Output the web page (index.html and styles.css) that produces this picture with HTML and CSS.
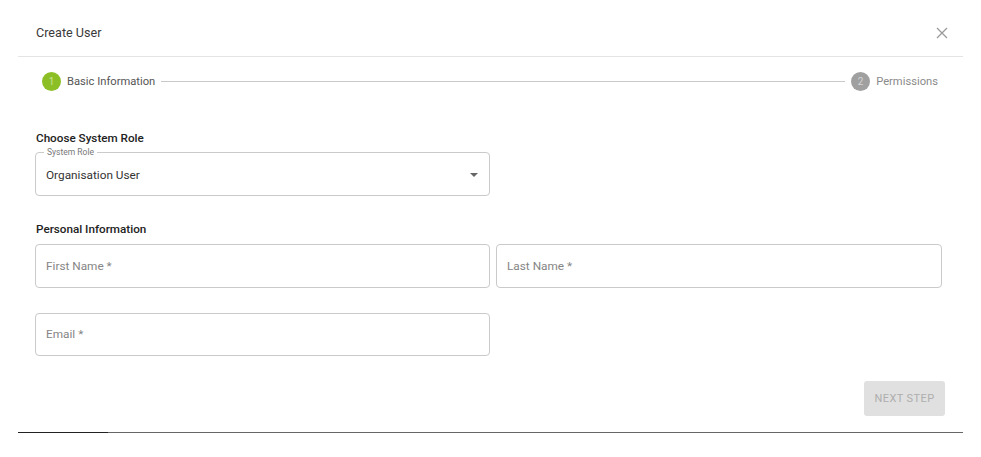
FILE: index.html
```html
<!DOCTYPE html>
<html>
<head>
<meta charset="utf-8">
<link rel="stylesheet" href="styles.css">
</head>
<body>
<div class="dialog">
  <div class="header">
    <span class="title">Create User</span>
    <svg class="close" width="12" height="12" viewBox="0 0 12 12"><path d="M1 1L11 11M11 1L1 11" stroke="#9a9a9a" stroke-width="1.3" fill="none"/></svg>
  </div>
  <div class="stepper">
    <span class="step-num active">1</span>
    <span class="step-label">Basic Information</span>
    <span class="step-line"></span>
    <span class="step-num">2</span>
    <span class="step-label muted">Permissions</span>
  </div>
  <div class="form">
    <div class="section-title">Choose System Role</div>
    <div class="field select">
      <span class="legend">System Role</span>
      <span class="value">Organisation User</span>
      <span class="arrow"></span>
    </div>
    <div class="section-title second">Personal Information</div>
    <div class="grid">
      <div class="field"><span class="placeholder">First Name *</span></div>
      <div class="field"><span class="placeholder">Last Name *</span></div>
      <div class="field"><span class="placeholder">Email *</span></div>
    </div>
    <div class="actions">
      <button class="next">NEXT STEP</button>
    </div>
  </div>
  <div class="bottom"><div class="bottom-active"></div></div>
</div>
</body>
</html>
```
FILE: styles.css
```css
* { box-sizing: border-box; }
html, body { margin: 0; padding: 0; background: #fff; }
body { font-family: Roboto, "Noto Sans", sans-serif; color: #333; }
.dialog { margin-left: 18px; width: 945px; }
.header {
  height: 57px;
  padding: 8px 15px 0 18px;
  border-bottom: 1px solid #e4e4e4;
  display: flex;
  align-items: center;
  justify-content: space-between;
}
.title { font-size: 12.6px; color: #3a3a3a; }
.close { display: block; margin-top: 2px; }
.stepper {
  margin-top: 12px;
  height: 24px;
  padding: 0 25px 0 24px;
  display: flex;
  align-items: center;
}
.step-num {
  width: 19px; height: 19px; border-radius: 50%;
  background: #a0a0a0; color: #d6d6d6;
  font-size: 10px; display: flex; align-items: center; justify-content: center;
  flex: none;
}
.step-num.active { background: #8cbf26; color: #c8e39a; }
.step-label { font-size: 11.2px; color: #555; margin-left: 6px; }
.step-label.muted { color: #8a8a8a; }
.step-line { flex: 1; height: 1px; background: #c9c9c9; margin: 0 6px; }
.form { padding: 0 18px 0 17px; }
.section-title {
  font-size: 11.7px; font-weight: 500; color: #222;
  line-height: 16px; margin-top: 37px; padding-left: 1px;
}
.section-title.second { margin-top: 25px; }
.field {
  position: relative;
  height: 44px;
  border: 1px solid #cacaca;
  border-radius: 4px;
  display: flex;
  align-items: center;
  padding-left: 10px;
}
.select { width: 455px; margin-top: 6px; }
.legend {
  position: absolute; top: -6px; left: 8px;
  padding: 0 3px; background: #fff;
  font-size: 8.5px; line-height: 10px; color: #777;
}
.value { font-size: 11.8px; color: #333; margin-top: 1px; }
.arrow {
  position: absolute; right: 11px; top: 20px;
  width: 0; height: 0;
  border-left: 4px solid transparent; border-right: 4px solid transparent;
  border-top: 4px solid #666;
}
.placeholder { font-size: 11.8px; color: #858585; margin-top: -1px; }
.grid {
  display: grid;
  grid-template-columns: 455px 446px;
  column-gap: 6px;
  row-gap: 25px;
  margin-top: 7px;
}
.grid .field:nth-child(3) { height: 43px; }
.actions { display: flex; justify-content: flex-end; margin-top: 25px; }
.next {
  width: 81px; height: 35px;
  border: none; border-radius: 3px;
  background: #e0e0e0; color: #aeaeae;
  font-family: Roboto, sans-serif; font-size: 11px; font-weight: 400;
  letter-spacing: 0.4px;
  padding: 0;
}
.bottom { margin-top: 16px; height: 1px; background: #666; }
.bottom-active { width: 90px; height: 1px; background: #222; }
```
